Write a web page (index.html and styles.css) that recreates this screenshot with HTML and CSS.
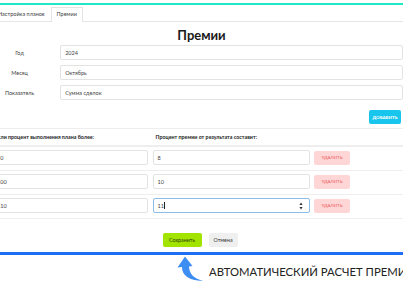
FILE: index.html
```html
<!DOCTYPE html>
<html lang="ru">
<head>
<meta charset="utf-8">
<link rel="stylesheet" href="styles.css">
</head>
<body>
<div class="topbar"></div>
<nav class="tabs">
  <div class="tab">Настройка планов</div>
  <div class="tab active">Премии</div>
</nav>
<h1 class="title">Премии</h1>
<section class="form shift">
  <div class="frow"><span class="flabel">Год</span><div class="field wide">2024</div></div>
  <div class="frow"><span class="flabel">Месяц</span><div class="field wide">Октябрь</div></div>
  <div class="frow"><span class="flabel">Показатель</span><div class="field wide">Сумма сделок</div></div>
</section>
<div class="addbar"><button class="btn-add">ДОБАВИТЬ</button></div>
<section class="table shift">
  <div class="thead">
    <div class="th">Если процент выполнения плана более:</div>
    <div class="th">Процент премии от результата составит:</div>
    <div></div>
  </div>
  <div class="trow">
    <div class="field">90</div>
    <div class="field">8</div>
    <button class="btn-del">УДАЛИТЬ</button>
  </div>
  <div class="trow">
    <div class="field">100</div>
    <div class="field">10</div>
    <button class="btn-del">УДАЛИТЬ</button>
  </div>
  <div class="trow">
    <div class="field">110</div>
    <div class="field focus"><span>11</span><span class="caret"></span><svg class="spin" viewBox="0 0 4 8" width="4" height="8"><path d="M2 0.5 L3.6 3 L0.4 3 Z M2 7.5 L3.6 5 L0.4 5 Z" fill="#333"/></svg></div>
    <button class="btn-del">УДАЛИТЬ</button>
  </div>
</section>
<div class="actions">
  <button class="btn-save">Сохранить</button>
  <button class="btn-cancel">Отмена</button>
</div>
<footer class="note">
  <svg class="arrow" viewBox="0 0 26 28" width="26" height="28"><path d="M8 0.5 L0.5 11.5 L5 11 C5 19 11 24.5 26 25 C16 22 12.5 18 12 10.5 L15.5 10 Z" fill="#3d8ef2"/></svg>
  <span class="note-text">АВТОМАТИЧЕСКИЙ РАСЧЕТ ПРЕМИИ</span>
</footer>
</body>
</html>
```
FILE: styles.css
```css
html, body {
  margin: 0;
  padding: 0;
}
body {
  width: 403px;
  height: 294px;
  overflow: hidden;
  background: #fff;
  font-family: Lato, "Open Sans", sans-serif;
  color: #333;
}
.topbar {
  height: 3px;
  border-bottom: 2px solid #1de9c7;
}
.tabs {
  display: flex;
  align-items: flex-end;
  height: 16px;
  margin-left: -8px;
  border-bottom: 1px solid #e6e6e6;
}
.tab {
  height: 13px;
  line-height: 13px;
  padding: 0 5px;
  font-size: 5.5px;
  color: #444;
  border: 1px solid transparent;
  border-bottom: none;
}
.tab.active {
  border-color: #e4e4e4;
  background: #fff;
  margin-bottom: -1px;
  height: 14px;
}
.title {
  margin: 0;
  height: 23px;
  line-height: 26px;
  text-align: center;
  font-size: 13px;
  font-weight: 700;
  color: #1a1a1a;
}
.shift {
  margin-left: -8px;
}
.form {
  display: flex;
  flex-direction: column;
  gap: 5px;
}
.frow {
  display: flex;
  align-items: center;
}
.flabel {
  width: 58px;
  text-align: center;
  font-size: 5.5px;
  color: #444;
}
.field {
  box-sizing: border-box;
  height: 15px;
  border: 1px solid #e3e3e3;
  border-radius: 2px;
  padding: 0 4px;
  display: flex;
  align-items: center;
  font-size: 5.5px;
  color: #444;
  background: #fff;
}
.field.wide {
  margin-left: 13px;
  width: 360px;
}
.field.focus {
  border-color: #8cbde6;
  position: relative;
}
.caret {
  width: 0.6px;
  height: 7px;
  background: #222;
  margin-left: 0.5px;
}
.spin {
  position: absolute;
  right: 6px;
  top: 3px;
}
.addbar {
  display: flex;
  justify-content: flex-end;
  padding: 10px 2px 4px 0;
  border-bottom: 1px solid #eee;
}
button {
  font-family: inherit;
  border: none;
  border-radius: 2px;
  padding: 0;
  cursor: pointer;
}
.btn-add {
  width: 32px;
  height: 14px;
  background: #18c5ec;
  color: #fff;
  font-size: 4.5px;
  font-weight: 700;
}
.thead, .trow {
  display: grid;
  grid-template-columns: 156px 157px 36px;
  column-gap: 4.5px;
  align-items: center;
}
.thead {
  height: 16px;
  border-bottom: 2px solid #eee;
}
.th {
  font-size: 5.3px;
  font-weight: 700;
  color: #222;
  padding-left: 3px;
}
.trow {
  padding: 3px 0 5px;
  border-bottom: 1px solid #eee;
}
.btn-del {
  height: 14px;
  background: #ffd6d6;
  color: #ee5a5a;
  font-size: 4.5px;
}
.actions {
  display: flex;
  justify-content: center;
  gap: 7px;
  margin-top: 14px;
  padding-right: 3px;
}
.btn-save {
  width: 39px;
  height: 14px;
  background: #a2e400;
  color: #2b3a10;
  font-size: 5.3px;
}
.btn-cancel {
  width: 29px;
  height: 14px;
  background: #efefef;
  color: #333;
  font-size: 5.3px;
}
.note {
  margin-top: 5px;
  border-top: 3px solid #1f6ff4;
  display: flex;
  align-items: flex-start;
  padding-left: 177px;
  white-space: nowrap;
}
.arrow {
  margin-top: 1px;
  flex: none;
}
.note-text {
  margin-left: 6px;
  margin-top: 10px;
  font-size: 11.3px;
  color: #222;
}
```
